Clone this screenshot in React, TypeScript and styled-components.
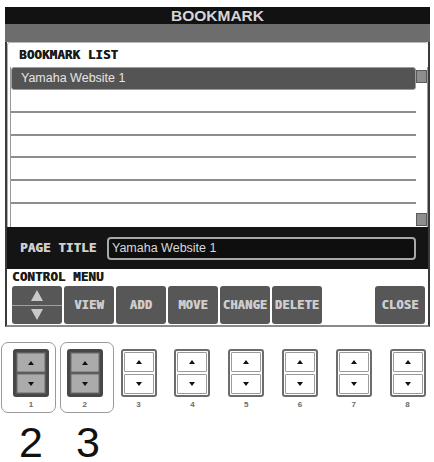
import React from "react";
import styled, { createGlobalStyle } from "styled-components";

const Global = createGlobalStyle`
  html, body { margin: 0; padding: 0; background: #fff; }
  body {
    width: 434px;
    height: 462px;
    overflow: hidden;
    font-family: "Liberation Sans", Arial, sans-serif;
  }
`;

const pixelFont = `"DejaVu Sans Mono", "Liberation Mono", monospace`;

const Page = styled.div`
  width: 434px;
  height: 462px;
  display: flex;
  flex-direction: column;
`;

const Screen = styled.div`
  margin: 7px 0 0 5px;
  width: 425px;
  box-sizing: border-box;
  border-left: 2px solid #3a3a3a;
  border-right: 2px solid #3a3a3a;
  border-bottom: 2px solid #8a8a8a;
  display: flex;
  flex-direction: column;
`;

const TitleBar = styled.div`
  height: 17px;
  margin: 0 -2px;
  background: #121212;
  color: #d6d6d6;
  font-family: "Liberation Sans", Arial, sans-serif;
  font-weight: bold;
  font-size: 15.5px;
  line-height: 17px;
  text-align: center;
`;

const GrayBand = styled.div`
  height: 18px;
  margin: 0 -2px;
  background: #6d6d6d;
`;

const ListPanel = styled.div`
  height: 185px;
  box-sizing: border-box;
  background: #fff;
  border-top: 1px solid #b8b8b8;
  border-left: 1px solid #b0b0b0;
  border-radius: 3px 3px 0 0;
  padding: 5px 0 0 2px;
  display: flex;
  flex-direction: column;
`;

const SectionLabel = styled.div<{ $light?: boolean; $indent?: number }>`
  font-family: ${pixelFont};
  font-weight: bold;
  font-size: 12.5px;
  line-height: 14px;
  letter-spacing: 0.1px;
  color: ${(p) => (p.$light ? "#cfcfcf" : "#1a1a1a")};
  text-shadow: 0.6px 0 0 currentColor;
  padding-left: ${(p) => p.$indent ?? 0}px;
  white-space: nowrap;
`;

const ListBody = styled.div`
  margin-top: 5px;
  height: 160px;
  display: flex;
`;

const List = styled.div`
  flex: 1;
  display: grid;
  grid-template-rows: repeat(7, 1fr);
  border-left: 1px solid #9a9a9a;
`;

const Row = styled.div<{ $selected?: boolean; $last?: boolean }>`
  display: flex;
  align-items: center;
  box-sizing: border-box;
  font-size: 12.5px;
  color: #e4e4e4;
  padding-left: 9px;
  background: ${(p) => (p.$selected ? "#545454" : "#fff")};
  border: ${(p) => (p.$selected ? "1px solid #9c9c9c" : "none")};
  border-radius: ${(p) => (p.$selected ? "3px" : "0")};
  border-bottom: ${(p) =>
    p.$selected ? "1px solid #9c9c9c" : p.$last ? "none" : "2px solid #8d8d8d"};
`;

const ScrollBar = styled.div`
  width: 12px;
  box-sizing: border-box;
  border-right: 1px solid #9a9a9a;
  display: flex;
  flex-direction: column;
  justify-content: space-between;
  padding: 3px 0 1px 0;
`;

const Thumb = styled.div`
  height: 13px;
  box-sizing: border-box;
  background: #8e8e8e;
  border: 1px solid #5a5a5a;
`;

const PageTitleBar = styled.div`
  height: 42px;
  background: #141414;
  display: grid;
  grid-template-columns: 87px 309px;
  align-items: center;
  padding-left: 13px;
`;

const TitleInput = styled.div`
  height: 23px;
  box-sizing: border-box;
  border: 2px solid #a8a8a8;
  border-radius: 4px;
  background: #0e0e0e;
  color: #d8d8d8;
  font-size: 12.5px;
  line-height: 19px;
  padding-left: 3px;
`;

const ControlMenu = styled.div`
  height: 56px;
  box-sizing: border-box;
  background: #fff;
  padding: 1px 3px 2px 5px;
  display: flex;
  flex-direction: column;
`;

const MenuRow = styled.div`
  margin-top: 2px;
  display: flex;
  gap: 2px;
`;

const MenuButton = styled.div<{ $push?: boolean }>`
  width: 50px;
  height: 38px;
  background: #575757;
  border-radius: 3px;
  color: #cdcdcd;
  font-family: ${pixelFont};
  font-weight: bold;
  font-size: 12px;
  text-shadow: 0.5px 0 0 currentColor;
  display: flex;
  align-items: center;
  justify-content: center;
  margin-left: ${(p) => (p.$push ? "auto" : "0")};
  letter-spacing: 0.2px;
`;

const ArrowButton = styled.div`
  width: 50px;
  height: 38px;
  background: #575757;
  border-radius: 3px;
  display: flex;
  flex-direction: column;
`;

const ArrowHalf = styled.div<{ $top?: boolean }>`
  flex: 1;
  display: flex;
  align-items: center;
  justify-content: center;
  border-bottom: ${(p) => (p.$top ? "1px solid #a0a0a0" : "none")};
`;

const Tri = styled.div<{ $dir: "up" | "down"; $w: number; $h: number; $color: string }>`
  width: 0;
  height: 0;
  border-left: ${(p) => p.$w / 2}px solid transparent;
  border-right: ${(p) => p.$w / 2}px solid transparent;
  ${(p) =>
    p.$dir === "up"
      ? `border-bottom: ${p.$h}px solid ${p.$color};`
      : `border-top: ${p.$h}px solid ${p.$color};`}
`;

const HardRow = styled.div`
  margin-top: 22px;
  padding-left: 13px;
  display: flex;
  gap: 17.8px;
`;

const HardCell = styled.div<{ $hl?: boolean; $l?: number; $r?: number }>`
  position: relative;
  width: 36px;
  display: flex;
  flex-direction: column;
  align-items: center;
  ${(p) =>
    p.$hl
      ? `&::before {
          content: "";
          position: absolute;
          top: -7px;
          bottom: -4px;
          left: ${p.$l}px;
          right: ${p.$r}px;
          border: 1.5px solid #9a9a9a;
          border-radius: 7px;
        }`
      : ""}
`;

const HardButton = styled.div<{ $pressed?: boolean }>`
  width: 36px;
  height: 48px;
  box-sizing: border-box;
  border: ${(p) => (p.$pressed ? "3px solid #474747" : "2px solid #6c6c6c")};
  border-radius: 3px;
  background: ${(p) => (p.$pressed ? "#5c5c5c" : "#fff")};
  padding: 1px;
  display: flex;
  flex-direction: column;
  gap: 2px;
`;

const HardHalf = styled.div<{ $pressed?: boolean }>`
  flex: 1;
  box-sizing: border-box;
  border-radius: 1px;
  background: ${(p) => (p.$pressed ? "#ababab" : "#fff")};
  border: 1px solid ${(p) => (p.$pressed ? "#8a8a8a" : "#9a9a9a")};
  display: flex;
  align-items: center;
  justify-content: center;
`;

const HardNum = styled.div`
  margin-top: 3px;
  font-size: 8px;
  line-height: 9px;
  font-weight: bold;
  color: #6a6a6a;
`;

const BigRow = styled.div`
  margin-top: 14px;
  padding-left: 4px;
  display: flex;
  gap: 3px;
`;

const BigNum = styled.div`
  width: 54px;
  text-align: center;
  font-family: "Liberation Sans", Arial, sans-serif;
  font-size: 43px;
  line-height: 38px;
  color: #111;
`;

const rows = ["Yamaha Website 1", "", "", "", "", "", ""];
const menu = ["VIEW", "ADD", "MOVE", "CHANGE", "DELETE"];
const hard = [1, 2, 3, 4, 5, 6, 7, 8];
const outlines: Record<number, [number, number]> = { 1: [-12, -7], 2: [-7, -11] };

export default function App() {
  return (
    <Page>
      <Global />
      <Screen>
        <TitleBar>BOOKMARK</TitleBar>
        <GrayBand />
        <ListPanel>
          <SectionLabel $indent={9}>BOOKMARK LIST</SectionLabel>
          <ListBody>
            <List>
              {rows.map((r, i) => (
                <Row key={i} $selected={i === 0} $last={i === rows.length - 1}>
                  {r}
                </Row>
              ))}
            </List>
            <ScrollBar>
              <Thumb />
              <Thumb />
            </ScrollBar>
          </ListBody>
        </ListPanel>
        <PageTitleBar>
          <SectionLabel $light>PAGE TITLE</SectionLabel>
          <TitleInput>Yamaha Website 1</TitleInput>
        </PageTitleBar>
        <ControlMenu>
          <SectionLabel>CONTROL MENU</SectionLabel>
          <MenuRow>
            <ArrowButton>
              <ArrowHalf $top>
                <Tri $dir="up" $w={13} $h={11} $color="#c9c9c9" />
              </ArrowHalf>
              <ArrowHalf>
                <Tri $dir="down" $w={13} $h={11} $color="#c9c9c9" />
              </ArrowHalf>
            </ArrowButton>
            {menu.map((m) => (
              <MenuButton key={m}>{m}</MenuButton>
            ))}
            <MenuButton $push>CLOSE</MenuButton>
          </MenuRow>
        </ControlMenu>
      </Screen>
      <HardRow>
        {hard.map((n) => {
          const pressed = n <= 2;
          const o = outlines[n];
          return (
            <HardCell key={n} $hl={!!o} $l={o?.[0]} $r={o?.[1]}>
              <HardButton $pressed={pressed}>
                <HardHalf $pressed={pressed}>
                  <Tri $dir="up" $w={7} $h={4} $color="#111" />
                </HardHalf>
                <HardHalf $pressed={pressed}>
                  <Tri $dir="down" $w={7} $h={4} $color="#111" />
                </HardHalf>
              </HardButton>
              <HardNum>{n}</HardNum>
            </HardCell>
          );
        })}
      </HardRow>
      <BigRow>
        <BigNum>2</BigNum>
        <BigNum>3</BigNum>
      </BigRow>
    </Page>
  );
}
